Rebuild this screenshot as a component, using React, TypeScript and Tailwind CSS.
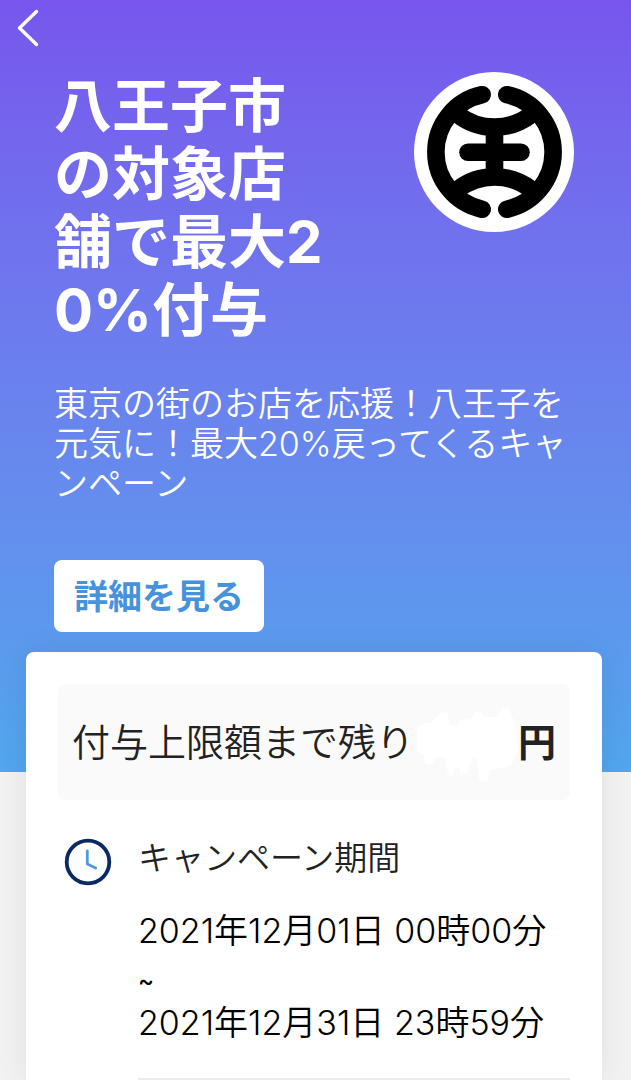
import React from "react";

function BackButton() {
  return (
    <button type="button" aria-label="戻る" className="block px-4 py-2 text-white">
      <svg width="24" height="40" viewBox="0 0 24 40" fill="none" aria-hidden="true">
        <path d="M20.5 3.5 3.5 20l17 16.5" stroke="currentColor" strokeWidth="3.4" strokeLinecap="round" strokeLinejoin="round" />
      </svg>
    </button>
  );
}

function CityEmblem() {
  return (
    <svg width="160" height="160" viewBox="0 0 160 160" fill="none" role="img" aria-label="八王子市" className="shrink-0">
      <circle cx="80" cy="80" r="80" fill="#fff" />
      <g stroke="#000" strokeWidth="17.6">
        <path d="M68.2 22.7A58.6 58.6 0 0 0 68.2 137.3" strokeLinecap="round" />
        <path d="M92.8 22.7A58.6 58.6 0 0 1 92.8 137.3" strokeLinecap="round" />
        <path d="M44 42.7A59.7 59.7 0 0 0 117 42.7" />
        <path d="M44 117.3A59.7 59.7 0 0 1 117 117.3" />
        <path d="M80.5 58V102" />
        <path d="M54 80.2H107" strokeLinecap="round" />
      </g>
    </svg>
  );
}

function ClockIcon() {
  return (
    <svg width="48" height="48" viewBox="0 0 48 48" fill="none" aria-hidden="true" className="shrink-0">
      <circle cx="24" cy="24" r="21.3" stroke="#0b2a63" strokeWidth="3.8" />
      <path d="M23.3 12.8V26l8.4 4" stroke="#5499d6" strokeWidth="2.8" strokeLinecap="round" strokeLinejoin="round" />
    </svg>
  );
}

function MaskedAmount() {
  return (
    <svg width="102" height="84" viewBox="1 -8 102 84" aria-hidden="true" className="shrink-0">
      <path
        d="M2 20Q8 14 17 15L20 10 26 5 33 4 34 16 42 20 45 12 56 11 60 4 66 3 68 9 80 9 86 3 88 0 94 1 99 13 102 28 103 42 98 54 94 58 75 62 73 72 68 74 64 72 62 52 57 50 52 66 46 67 45 60 40 58 38 68 33 67 30 50 24 48 19 52 17 57 10 56 9 47 2 43Z"
        fill="#fff"
      />
    </svg>
  );
}

export default function App() {
  return (
    <div className="bg-white font-['Inter','Noto_Sans_CJK_JP',sans-serif]" lang="ja">
      <main className="overflow-hidden bg-[#f2f2f2]">
        <header className="bg-linear-to-b from-[#7756ed] to-[#51a6ed] pb-35">
          <BackButton />
          <div className="flex items-start justify-between pt-4 pr-[57px] pl-[54px]">
            <h1 className="w-[280px] text-[58px] leading-[68px] font-bold break-all text-white">
              八王子市の対象店舗で最大20%付与
            </h1>
            <CityEmblem />
          </div>
          <p className="mt-10 pr-[57px] pl-[54px] text-[34px] leading-10 font-[350] break-all text-white">
            東京の街のお店を応援！八王子を元気に！最大20%戻ってくるキャンペーン
          </p>
          <a
            href="#details"
            className="mt-14 ml-[54px] inline-flex h-[72px] items-center rounded-lg bg-white px-5 text-[34px] font-bold text-[#4792dc]"
          >
            詳細を見る
          </a>
        </header>

        <section
          id="details"
          className="-mt-[120px] mr-[29px] ml-[26px] rounded-t-lg bg-white px-8 pt-8 shadow-[0_0_30px_rgba(0,0,0,0.08)]"
        >
          <div className="flex h-[116px] items-center justify-between rounded-lg bg-[#fafafa] px-[14px] text-[38px] text-[#222]">
            <span className="font-[350] whitespace-nowrap">付与上限額まで残り</span>
            <span className="flex items-center">
              <MaskedAmount />
              <strong className="font-bold">円</strong>
            </span>
          </div>

          <div className="mt-8 flex items-start gap-[26px] pl-1.5">
            <div className="pt-1.5">
              <ClockIcon />
            </div>
            <div className="min-w-0 flex-1">
              <h2 className="text-[33px] leading-[52px] font-[350] text-[#222]">キャンペーン期間</h2>
              <p className="mt-6 text-[34px] leading-[46px] font-[350] text-black">
                2021年12月01日 00時00分
                <br />
                <span className="text-2xl font-medium">~</span>
                <br />
                2021年12月31日 23時59分
              </p>
              <hr className="mt-8 border-t-2 border-[#ececec]" />
            </div>
          </div>
        </section>
      </main>
    </div>
  );
}
